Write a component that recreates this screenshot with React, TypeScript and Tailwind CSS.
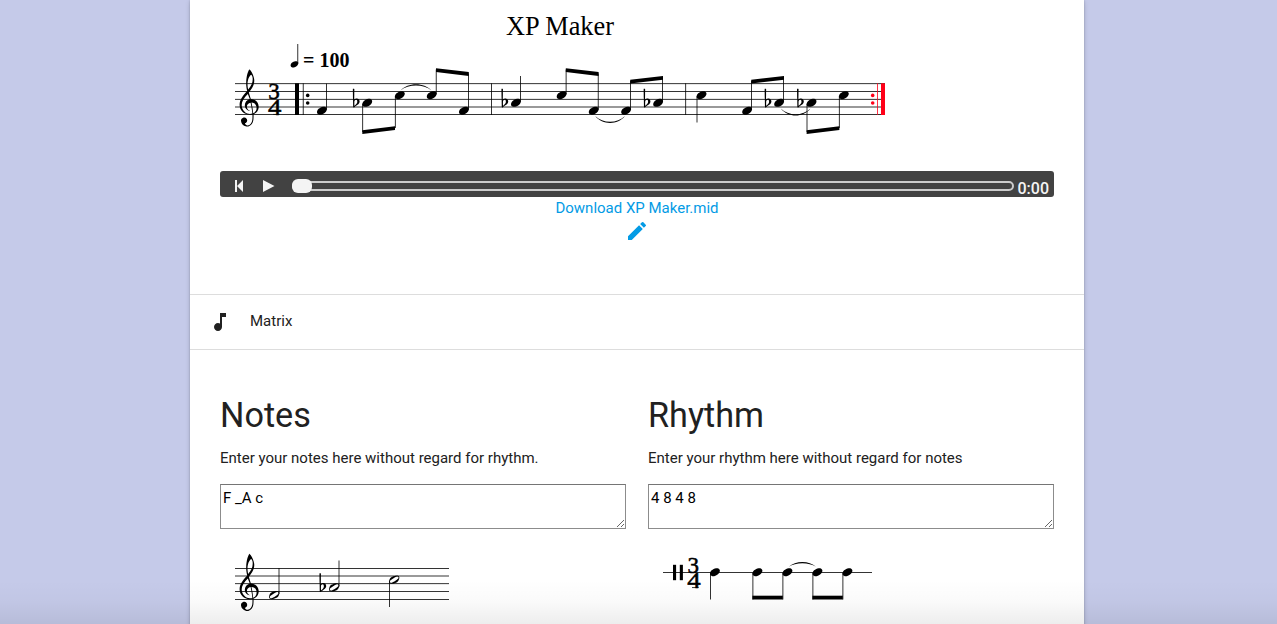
import { MdEdit, MdMusicNote } from "react-icons/md";

const HEAD =
  "M6.09,-4.05c0.36,-0.03,1.2,0,1.53,0.06c1.17,0.24,1.89,0.84,2.16,1.83c0.06,0.18,0.06,0.3,0.06,0.66c0,0.45,0,0.63,-0.15,1.08c-0.66,2.04,-3.06,3.93,-5.52,4.38c-0.54,0.09,-1.44,0.09,-1.83,0.03c-1.23,-0.27,-1.98,-0.87,-2.25,-1.86c-0.06,-0.18,-0.06,-0.3,-0.06,-0.66c0,-0.45,0,-0.63,0.15,-1.08c0.24,-0.78,0.75,-1.53,1.44,-2.22c1.2,-1.2,2.85,-2.01,4.47,-2.22z";
const HALF =
  "M7.44,-4.05c0.06,-0.03,0.27,-0.03,0.48,-0.03c1.05,0,1.71,0.24,2.1,0.81c0.42,0.6,0.45,1.35,0.18,2.4c-0.42,1.59,-1.14,2.73,-2.16,3.39c-1.41,0.93,-3.18,1.44,-5.4,1.53c-1.17,0.03,-1.89,-0.21,-2.28,-0.81c-0.42,-0.6,-0.45,-1.35,-0.18,-2.4c0.42,-1.59,1.14,-2.73,2.16,-3.39c0.63,-0.42,1.23,-0.72,1.98,-0.96c0.9,-0.3,1.65,-0.42,3.12,-0.54zm1.29,0.87c-0.27,-0.09,-0.63,-0.12,-0.9,-0.03c-0.72,0.24,-1.53,0.69,-3.27,1.8c-2.34,1.5,-3.3,2.25,-3.57,2.79c-0.36,0.72,-0.06,1.5,0.66,1.77c0.24,0.12,0.69,0.09,0.99,0c0.84,-0.3,1.92,-0.93,4.14,-2.37c1.62,-1.08,2.37,-1.71,2.61,-2.19c0.36,-0.72,0.06,-1.5,-0.66,-1.77z";
const FLAT =
  "M-0.36,-14.07c0.33,-0.06,0.87,0,1.08,0.15c0.06,0.03,0.06,0.36,-0.03,5.25c-0.06,2.85,-0.09,5.19,-0.09,5.19c0,0.03,0.12,-0.03,0.24,-0.12c0.63,-0.42,1.41,-0.66,2.19,-0.72c0.81,-0.03,1.47,0.21,2.04,0.78c0.57,0.54,0.87,1.26,0.93,2.04c0.03,0.57,-0.09,1.08,-0.36,1.62c-0.42,0.81,-1.02,1.38,-2.82,2.61c-1.14,0.78,-1.44,1.02,-1.8,1.44c-0.18,0.18,-0.39,0.39,-0.45,0.42c-0.27,0.18,-0.57,0.15,-0.81,-0.06c-0.06,-0.09,-0.12,-0.18,-0.15,-0.27c-0.03,-0.06,-0.09,-3.27,-0.18,-8.34c-0.09,-4.53,-0.15,-8.58,-0.18,-9.03l0,-0.78l0.12,-0.06c0.06,-0.03,0.18,-0.09,0.27,-0.12zm3.18,11.01c-0.21,-0.12,-0.54,-0.15,-0.81,-0.06c-0.54,0.15,-0.99,0.63,-1.17,1.26c-0.06,0.3,-0.12,2.88,-0.06,3.87c0.03,0.42,0.03,0.81,0.06,0.9l0.03,0.12l0.45,-0.39c0.63,-0.54,1.26,-1.17,1.56,-1.59c0.3,-0.42,0.6,-0.99,0.72,-1.41c0.18,-0.69,0.09,-1.47,-0.18,-2.07c-0.15,-0.3,-0.33,-0.51,-0.6,-0.63z";
const CLEF =
  "M9.69,-37.41c0.09,-0.09,0.24,-0.06,0.36,0c0.12,0.09,0.57,0.6,0.96,1.11c1.77,2.34,3.21,5.85,3.57,8.73c0.21,1.56,0.03,3.27,-0.45,4.86c-0.69,2.31,-1.92,4.47,-4.23,7.44c-0.3,0.39,-0.57,0.72,-0.6,0.75c-0.03,0.06,0,0.15,0.18,0.78c0.54,1.68,1.38,4.44,1.68,5.49l0.09,0.42l0.39,0c1.47,0.09,2.76,0.51,3.96,1.29c1.83,1.23,3.06,3.21,3.39,5.52c0.09,0.45,0.12,1.29,0.06,1.74c-0.09,1.02,-0.33,1.83,-0.75,2.73c-0.84,1.71,-2.28,3.06,-4.02,3.72l-0.33,0.12l0.03,1.26c0,1.74,-0.06,3.63,-0.21,4.62c-0.45,3.06,-2.19,5.49,-4.47,6.21c-0.57,0.18,-0.9,0.21,-1.59,0.21c-0.69,0,-1.02,-0.03,-1.65,-0.21c-1.14,-0.27,-2.13,-0.84,-2.94,-1.65c-0.99,-0.99,-1.56,-2.16,-1.71,-3.54c-0.09,-0.81,0.06,-1.53,0.45,-2.13c0.63,-0.99,1.83,-1.56,3,-1.53c1.5,0.09,2.64,1.32,2.73,2.94c0.06,1.47,-0.93,2.7,-2.37,2.97C5.9,18 7,18.6 8,18.5C10.6,18.2 12.3,16 12.7,13C12.9,11.5 12.9,9.5 12.85,7.55C12,7.75 11,7.9 10,7.85C4.3,7.6 0,3.5 0,-2.1C0,-6.8 3,-10.9 7.6,-15.8C6.9,-18.5 6.4,-21.5 6.6,-25C6.8,-30.5 8.3,-35.5 9.69,-37.41zM11.6,-32.2C9.5,-31 7.9,-27 7.9,-22.5C7.9,-21 8.1,-19.4 8.5,-17.4C11.5,-20.5 13.1,-24 13.1,-27.6C13.1,-29.8 12.6,-31.5 11.6,-32.2zM8.2,-12.9C4.5,-9.2 2.1,-5.7 2.1,-2C2.1,3.6 6.6,7 10.4,7C11.2,7 12,6.9 12.75,6.7C12.4,2.5 11.6,-1.5 11,-4.2C8.6,-3.9 7.3,-2.1 7.3,-0.2C7.3,1.4 8.2,2.9 9.9,3.7C10,3.9 9.9,4.1 9.6,4C6.9,3.3 5.2,1.1 5.2,-1.4C5.2,-4.6 7.3,-7 10.2,-7.8zM11.9,-4.3C12.6,-1 13.3,2.6 13.6,6.4C15.9,5.4 17,3.5 17,1.2C17,-2 14.9,-4.3 11.9,-4.3z";

type Pt = { x: number; y: number };

function Glyph({ d, x, y, s = 1 }: Pt & { d: string; s?: number }) {
  return <path d={d} fillRule="evenodd" transform={`translate(${x} ${y}) scale(${s})`} />;
}

function Lines({ x1, x2, ys }: { x1: number; x2: number; ys: number[] }) {
  return (
    <>
      {ys.map((y) => (
        <rect key={y} x={x1} y={y - 0.4} width={x2 - x1} height={0.8} />
      ))}
    </>
  );
}

function Stem({ x, y1, y2 }: { x: number; y1: number; y2: number }) {
  return <rect x={x - 0.4} y={Math.min(y1, y2)} width={0.8} height={Math.abs(y2 - y1)} />;
}

function Beam({ x1, y1, x2, y2 }: { x1: number; y1: number; x2: number; y2: number }) {
  return <path d={`M${x1},${y1}L${x2},${y2}V${y2 + 3.8}L${x1},${y1 + 3.8}z`} />;
}

function Tie({ x1, x2, y, h }: { x1: number; x2: number; y: number; h: number }) {
  const a = x1 + (x2 - x1) * 0.25;
  const b = x2 - (x2 - x1) * 0.25;
  const c = y + h * 1.33;
  const i = y + (Math.abs(h) - 1.2) * Math.sign(h) * 1.33;
  return <path d={`M${x1},${y}C${a},${c} ${b},${c} ${x2},${y}C${b},${i} ${a},${i} ${x1},${y}z`} />;
}

function Meter({ x, top }: { x: number; top: number }) {
  return (
    <g className="font-['Liberation_Serif',serif] text-[23px]" stroke="#000" strokeWidth={0.5}>
      <text x={x - 5.8} y={top + 15.3} textLength={11.5} lengthAdjust="spacingAndGlyphs">3</text>
      <text x={x - 6} y={top + 31} textLength={13.4} lengthAdjust="spacingAndGlyphs">4</text>
      <rect x={x - 0.5} y={top + 30.3} width={6} height={0.4} strokeWidth={0.3} />
    </g>
  );
}

const F = 110.7;
const A = 102.8;
const C = 95.2;

const tune: { x: number; y: number; up?: boolean; end: number; flat?: number }[] = [
  { x: 317, y: F, up: true, end: 83.6 },
  { x: 362.3, y: A, end: 132, flat: 353.6 },
  { x: 394.9, y: C, end: 128 },
  { x: 426.8, y: C, up: true, end: 69.5 },
  { x: 459, y: F, up: true, end: 73.5 },
  { x: 511, y: A, up: true, end: 76, flat: 502.2 },
  { x: 556.7, y: C, up: true, end: 69.5 },
  { x: 588.8, y: F, up: true, end: 73.5 },
  { x: 621.2, y: F, up: true, end: 81 },
  { x: 653.2, y: A, up: true, end: 77.5, flat: 644.4 },
  { x: 696.6, y: C, end: 122.5 },
  { x: 742.2, y: F, up: true, end: 81 },
  { x: 774.2, y: A, up: true, end: 77.5, flat: 765.4 },
  { x: 806.6, y: A, end: 132, flat: 797.8 },
  { x: 838.9, y: C, end: 128 },
];

function Score() {
  return (
    <svg className="block h-[171px] w-[834px]" viewBox="220 0 834 171">
      <text
        x="506"
        y="35"
        textLength="108"
        lengthAdjust="spacingAndGlyphs"
        className="font-['Liberation_Serif',serif] text-[26.4px]"
      >
        XP Maker
      </text>
      <Glyph d={HEAD} x={290.6} y={64.3} s={0.78} />
      <Stem x={297.8} y1={44} y2={63.5} />
      <text x="303" y="67" className="font-['Liberation_Serif',serif] text-[20px] font-bold">
        = 100
      </text>
      <Lines x1={235} x2={885} ys={[83.7, 91.5, 99.3, 107, 114.6]} />
      <Glyph d={CLEF} x={239.6} y={106.9} />
      <Meter x={274} top={83.8} />
      <rect x="295" y="83.3" width="4" height="31.7" />
      <Stem x={303.2} y1={83.3} y2={115} />
      <circle cx="307.7" cy="95.4" r="1.8" />
      <circle cx="307.7" cy="103" r="1.8" />
      {tune.map((n) => (
        <g key={n.x}>
          <Glyph d={HEAD} x={n.x} y={n.y} />
          <Stem x={n.up ? n.x + 9.4 : n.x + 0.4} y1={n.up ? n.y - 1 : n.y + 1} y2={n.end} />
          {n.flat !== undefined && <Glyph d={FLAT} x={n.flat} y={n.y} />}
        </g>
      ))}
      <Beam x1={362.3} y1={130.2} x2={395} y2={126.2} />
      <Beam x1={436} y1={68.3} x2={468.8} y2={72.1} />
      <Beam x1={565.8} y1={68.3} x2={598.6} y2={72.1} />
      <Beam x1={630.2} y1={79.8} x2={663} y2={76} />
      <Beam x1={751.2} y1={79.8} x2={784} y2={76} />
      <Beam x1={806.6} y1={130.2} x2={839.4} y2={126.2} />
      <Tie x1={400.5} x2={431.5} y={90.5} h={-6.3} />
      <Tie x1={595.2} x2={625} y={116} h={7} />
      <Tie x1={780.8} x2={810.5} y={108.6} h={7} />
      <Stem x={491.4} y1={83.3} y2={115} />
      <Stem x={685.7} y1={83.3} y2={115} />
      <g fill="#ff0018">
        <circle cx="872.7" cy="95.4" r="1.8" />
        <circle cx="872.7" cy="103" r="1.8" />
        <Stem x={877.5} y1={83.3} y2={115} />
        <rect x="881" y="83.3" width="4" height="31.7" />
      </g>
    </svg>
  );
}

function NotesScore() {
  return (
    <svg className="block h-[95px] w-[406px]" viewBox="220 529 406 95">
      <Lines x1={235} x2={449} ys={[568.4, 576, 583.7, 591.5, 599.4]} />
      <Glyph d={CLEF} x={239.6} y={591.3} />
      <Glyph d={HALF} x={269} y={595.1} />
      <Stem x={279} y1={568} y2={594} />
      <Glyph d={FLAT} x={320.2} y={587.4} />
      <Glyph d={HALF} x={329} y={587.4} />
      <Stem x={339} y1={560.5} y2={586.5} />
      <Glyph d={HALF} x={389} y={579.7} />
      <Stem x={389.6} y1={581} y2={607} />
    </svg>
  );
}

const beats = [710, 752.5, 782.5, 812.5, 842.5];

function RhythmScore() {
  return (
    <svg className="block h-[95px] w-[406px]" viewBox="648 529 406 95">
      <Lines x1={663} x2={872} ys={[572.5]} />
      <rect x="673" y="564.8" width="3.1" height="15.4" />
      <rect x="679.8" y="564.8" width="3.1" height="15.4" />
      <Meter x={693.2} top={557.2} />
      {beats.map((x) => (
        <g key={x}>
          <Glyph d={HEAD} x={x} y={572.2} />
          <Stem x={x + 0.4} y1={573} y2={599.5} />
        </g>
      ))}
      <rect x="752.4" y="595.7" width="30.4" height="3.8" />
      <rect x="812.4" y="595.7" width="30.4" height="3.8" />
      <Tie x1={788.7} x2={816} y={566.8} h={-4.8} />
    </svg>
  );
}

function Player() {
  return (
    <div className="flex h-[26px] items-center rounded-[3px] bg-[#424242] pr-[5px]">
      <svg className="h-[26px] w-[72px] shrink-0" viewBox="0 0 72 26" fill="#f4f4f4">
        <rect x="15" y="9" width="2" height="12" />
        <path d="M23 9v12l-6-6zM43 9l11.5 6L43 21z" />
      </svg>
      <div className="mt-[4px] flex h-[10px] w-[722px] items-center rounded-[5px] border-2 border-[#cccccc]">
        <div className="-ml-[2px] h-[14px] w-5 shrink-0 rounded-[6px] bg-[#f4f4f4]" />
      </div>
      <span className="mt-[10px] ml-auto text-[16px] leading-[20px] font-medium text-[#f4f4f4]">0:00</span>
    </div>
  );
}

function Editor({ title, hint, value, children }: { title: string; hint: string; value: string; children: React.ReactNode }) {
  return (
    <section className="w-[406px]">
      <h4 className="h-[40px] text-[34.2px] leading-[40px]">{title}</h4>
      <p className="mt-[12px] h-[22px] text-[15px] leading-[22px]">{hint}</p>
      <textarea
        aria-label={title}
        defaultValue={value}
        className="mt-[15px] block h-[45px] w-full resize overflow-auto border border-[#8c8c8c] border-t-[#757575] px-[2px] pt-[2px] text-[15px] leading-[22px] text-black outline-none"
      />
      {children}
    </section>
  );
}

export default function App() {
  return (
    <div className="relative flex h-[624px] justify-center overflow-hidden bg-[#c5cae9] pr-[3px] font-['Roboto',sans-serif] text-[15px] text-[#212121]">
      <main className="flex h-[700px] w-[894px] shrink-0 flex-col bg-white shadow-[0_2px_5px_rgba(0,0,0,0.16),0_0_2px_rgba(0,0,0,0.2)]">
        <div className="flex h-[295px] shrink-0 flex-col border-b border-[#dddddd] px-[30px]">
          <Score />
          <Player />
          <a href="#download" className="h-[22px] self-center text-[15px] leading-[22px] text-[#039be5]">
            Download XP Maker.mid
          </a>
          <MdEdit className="size-6 self-center text-[#039be5]" />
        </div>
        <div className="flex h-[55px] shrink-0 items-center border-b border-[#dddddd] pb-[2px] pl-[18px]">
          <MdMusicNote className="mt-[1px] size-6" />
          <span className="ml-[18px] leading-[22px]">Matrix</span>
        </div>
        <div className="flex justify-between px-[30px] pt-[45px]">
          <Editor title="Notes" hint="Enter your notes here without regard for rhythm." value="F _A c">
            <NotesScore />
          </Editor>
          <Editor title="Rhythm" hint="Enter your rhythm here without regard for notes" value="4 8 4 8">
            <RhythmScore />
          </Editor>
        </div>
      </main>
      <div className="pointer-events-none absolute inset-x-0 bottom-0 h-[44px] bg-linear-to-b from-transparent via-black/2 to-black/7" />
    </div>
  );
}
